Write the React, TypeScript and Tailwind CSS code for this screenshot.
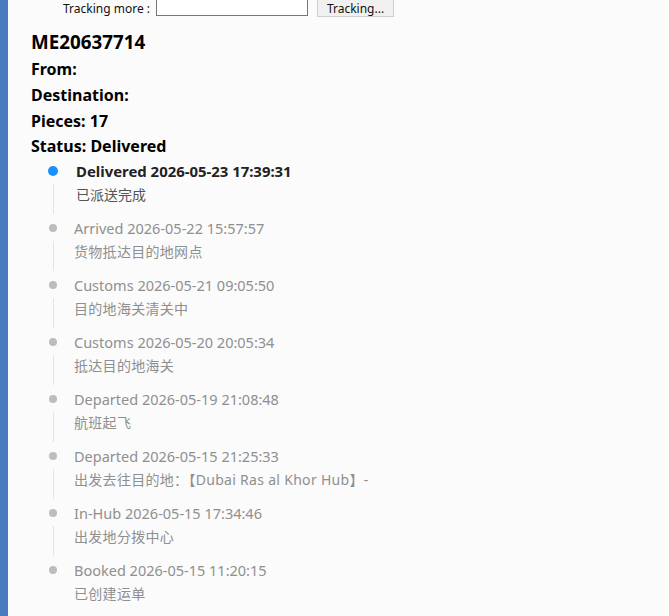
import React from "react";

interface ITrackEvent {
  status: string;
  time: string;
  desc: string;
}

const events: ITrackEvent[] = [
  { status: "Delivered", time: "2026-05-23 17:39:31", desc: "已派送完成" },
  { status: "Arrived", time: "2026-05-22 15:57:57", desc: "货物抵达目的地网点" },
  { status: "Customs", time: "2026-05-21 09:05:50", desc: "目的地海关清关中" },
  { status: "Customs", time: "2026-05-20 20:05:34", desc: "抵达目的地海关" },
  { status: "Departed", time: "2026-05-19 21:08:48", desc: "航班起飞" },
  {
    status: "Departed",
    time: "2026-05-15 21:25:33",
    desc: "出发去往目的地：【Dubai Ras al Khor Hub】-",
  },
  { status: "In-Hub", time: "2026-05-15 17:34:46", desc: "出发地分拨中心" },
  { status: "Booked", time: "2026-05-15 11:20:15", desc: "已创建运单" },
];

const font = {
  fontFamily: '"Noto Sans", "Noto Sans CJK SC", sans-serif',
};

const TimelineItem: React.FC<{ ev: ITrackEvent; active: boolean; last: boolean }> = ({
  ev,
  active,
  last,
}) => {
  return (
    <li className="relative h-[57px] pl-[66px]">
      {active ? (
        <span className="absolute left-[40px] top-[7px] w-[10px] h-[10px] rounded-full bg-[#1890ff]" />
      ) : (
        <span className="absolute left-[41px] top-[8px] w-[8px] h-[8px] rounded-full bg-[#bdbdbd]" />
      )}
      {!last && (
        <span className="absolute left-[45px] top-[25px] h-[30px] w-px bg-[#e4e4e4]" />
      )}
      <div
        className={
          active
            ? "h-6 leading-6 text-[14.9px] font-bold text-[#222] ml-[2px] whitespace-nowrap"
            : "h-6 leading-6 text-[14.5px] text-[#8f8f8f] whitespace-nowrap"
        }
      >
        {ev.status} {ev.time}
      </div>
      <div
        className={
          active
            ? "h-6 leading-6 text-[14px] text-[#555] ml-[2px] whitespace-nowrap"
            : "h-6 leading-6 text-[14px] text-[#8f8f8f] whitespace-nowrap tracking-[0.3px]"
        }
      >
        {ev.desc}
      </div>
    </li>
  );
};

export default function App() {
  return (
    <div className="flex min-h-screen bg-[#fbfbfb] overflow-hidden" style={font}>
      <div className="w-2 shrink-0 bg-[#4a7bbf]" />
      <div className="flex-1">
        <div className="flex items-start h-[17px] pl-[55px] text-[12px] text-[#111]">
          <span className="mr-[6px] leading-[16px] pt-px">Tracking more :</span>
          <input
            className="-mt-[4px] w-[152px] h-[20px] border border-[#767676] bg-white"
            type="text"
          />
          <button className="-mt-[4px] ml-[9px] w-[77px] h-[21px] border border-[#cfcfcf] bg-[#f0f0f0] text-[12px] leading-none pt-[4px]">
            Tracking...
          </button>
        </div>
        <div className="pl-[23px] pt-[12px]">
          <h1 className="text-[18.8px] font-bold leading-[27px] text-black">ME20637714</h1>
          <div className="text-[16px] font-bold leading-[26px] text-black">From:</div>
          <div className="text-[16px] font-bold leading-[26px] text-black">Destination:</div>
          <div className="text-[16px] font-bold leading-[26px] text-black">Pieces: 17</div>
          <div className="text-[16px] font-bold leading-[25px] text-black">Status: Delivered</div>
        </div>
        <ul>
          {events.map((ev, i) => (
            <TimelineItem key={i} ev={ev} active={i === 0} last={i === events.length - 1} />
          ))}
        </ul>
      </div>
    </div>
  );
}
